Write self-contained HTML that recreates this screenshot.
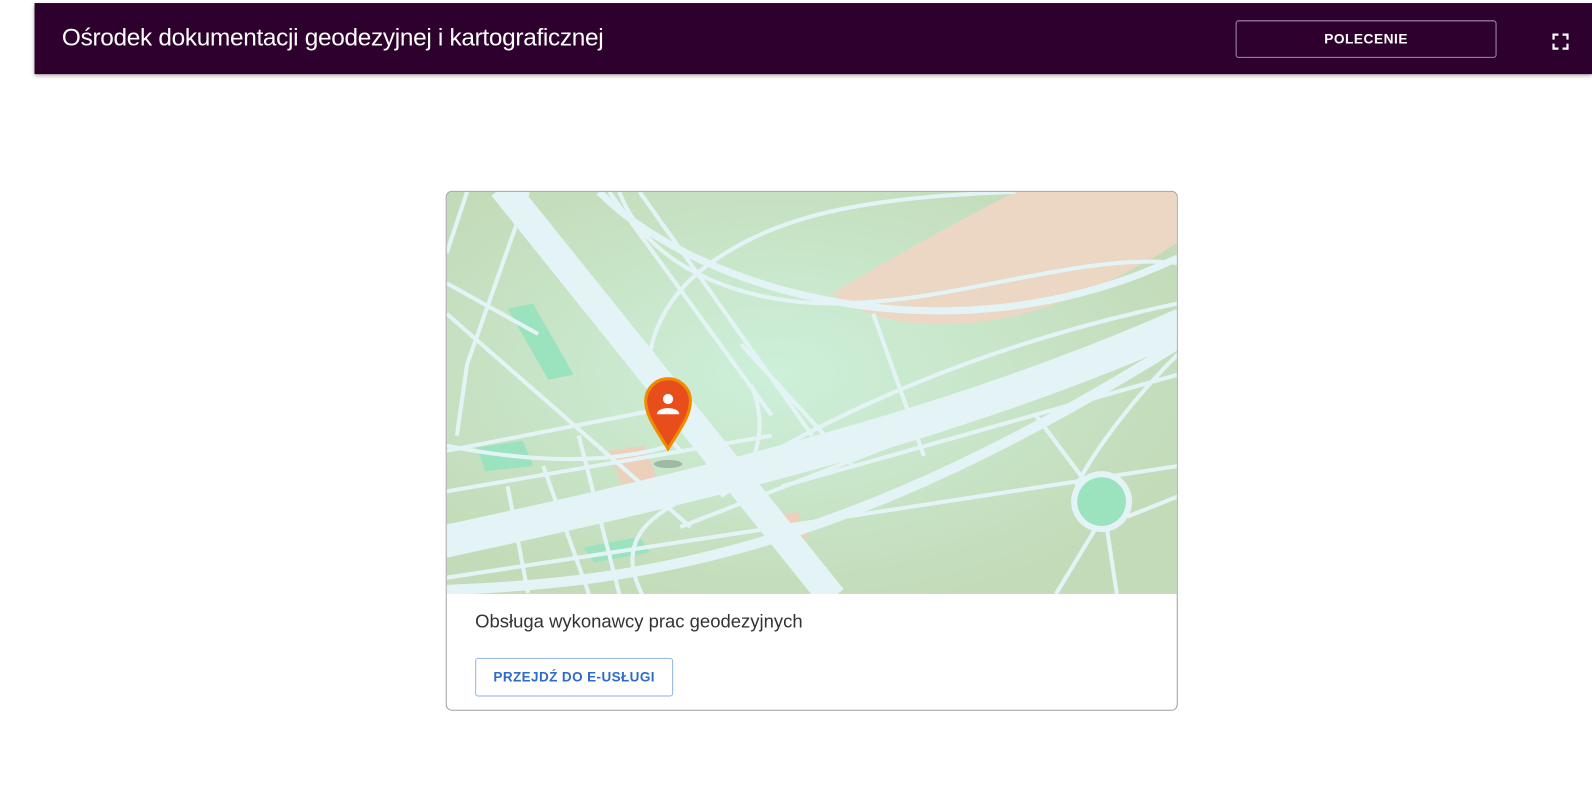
<!DOCTYPE html>
<html><head><meta charset="utf-8"><style>
body{margin:0;width:1592px;height:808px;background:#fff;font-family:"Liberation Sans",sans-serif;position:relative;overflow:hidden}
.wrap{position:absolute;left:0;top:0;width:1568px;height:796px;transform:scale(1.0153);transform-origin:0 0}
.hdr{position:absolute;left:34px;top:3px;width:1534px;height:70px;background:#2d002d;box-shadow:0 2px 4px rgba(0,0,0,.35)}
.hdr h1{position:absolute;left:27px;top:0;margin:0;line-height:70px;font-size:24px;font-weight:normal;color:#fff;letter-spacing:-0.3px}
.btn{position:absolute;left:1183px;top:17px;width:255px;height:35px;border:1.5px solid #a58ea5;border-radius:3px;color:#fff;font-weight:bold;font-size:13.5px;text-align:center;line-height:35px;letter-spacing:.5px}
.fs{position:absolute;left:1495px;top:30px}
.card{position:absolute;left:439px;top:188px;width:719px;height:510px;border:1px solid #a0a0a0;border-radius:6px;overflow:hidden;background:#fff}
.card p{position:absolute;left:28px;top:413px;margin:0;font-size:18.2px;color:#333}
.cb{position:absolute;left:28px;top:459px;width:193px;height:36px;border:1px solid #8db3e8;border-radius:3px;color:#2f6bc8;font-weight:bold;font-size:13.3px;text-align:center;line-height:36px;letter-spacing:.4px}
</style></head><body><div class="wrap">
<div class="hdr"><h1>Ośrodek dokumentacji geodezyjnej i kartograficznej</h1>
<div class="btn">POLECENIE</div>
<svg class="fs" width="16" height="16" viewBox="0 0 16 16" fill="none" stroke="#fff" stroke-width="2.4"><path d="M1 6V1h5M10 1h5v5M15 10v5h-5M6 15H1v-5"/></svg>
</div>
<div class="card">
<svg width="720" height="396" viewBox="0 0 720 396" style="position:absolute;left:0;top:0">
<defs><radialGradient id="g" cx="45%" cy="45%" r="60%"><stop offset="0" stop-color="#cdf0da"/><stop offset="1" stop-color="#c3dbb8"/></radialGradient></defs>
<rect width="720" height="396" fill="url(#g)"/>
<path d="M380 100 C480 40 560 0 560 0 L720 0 L720 50 C640 100 560 135 470 130 C430 128 400 115 380 100Z" fill="#ecd7c4"/>
<path d="M60 115 L85 110 L125 180 L100 185Z" fill="#9ae3be"/>
<path d="M30 252 L75 245 L85 270 L38 275Z" fill="#9ae3be"/>
<path d="M135 350 L190 340 L200 355 L145 365Z" fill="#9ae3be"/>
<path d="M160 255 L195 250 L210 290 L175 295Z" fill="#ecd0bc"/>
<path d="M320 320 L345 315 L357 340 L332 345Z" fill="#ecd0bc"/>
<g fill="none" stroke="#e4f4f6" stroke-width="4">
<path d="M0 120 L240 330 M0 90 L90 140 M20 0 L0 60 M80 0 L20 170 L10 240 M160 0 L320 220 M190 0 L360 240 M170 0 C200 80 300 110 380 110 C500 110 620 60 720 70"/>
<path d="M0 250 C100 270 170 265 220 250 M0 295 L320 240 M0 255 L230 210 M60 290 L80 395 M95 270 L140 396 M130 240 L170 396"/>
<path d="M230 255 C180 200 190 120 260 70 C330 20 420 5 560 0 M200 410 C150 330 220 310 280 280 C330 250 480 160 720 110"/>
<path d="M300 190 C320 240 300 280 270 300 M420 120 L470 260 M290 150 L400 270 M0 380 L720 270 M330 290 L720 180 M230 330 L720 140 M580 220 L640 300 M650 330 L660 396 M640 330 L600 396 M670 320 L720 300 M620 290 C640 250 680 200 720 160"/>
<path d="M150 0 C250 100 500 170 720 65" stroke-width="7"/>
</g>
<path d="M55 -5 L380 400" stroke="#e4f4f6" stroke-width="28" fill="none"/>
<path d="M-5 345 C250 290 500 230 725 130" stroke="#e4f4f6" stroke-width="32" fill="none"/>
<path d="M0 392 C200 385 400 350 720 150" stroke="#e4f4f6" stroke-width="10" fill="none"/>
<circle cx="645" cy="305" r="30" fill="#e4f4f6"/><circle cx="645" cy="305" r="24" fill="#9ae3be"/>
<ellipse cx="218" cy="268" rx="14" ry="4" fill="#7a8a80" opacity=".5"/>
<path d="M218 253 C205 232 196 220 196 206 A22 22 0 0 1 240 206 C240 220 231 232 218 253Z" fill="#e84d1c" stroke="#f08b00" stroke-width="3"/>
<circle cx="218" cy="204" r="5" fill="#fff"/><path d="M207 219 C207 211 229 211 229 219Z" fill="#fff"/>
</svg>
<p>Obsługa wykonawcy prac geodezyjnych</p>
<div class="cb">PRZEJDŹ DO E-USŁUGI</div>
</div>
</div></body></html>
